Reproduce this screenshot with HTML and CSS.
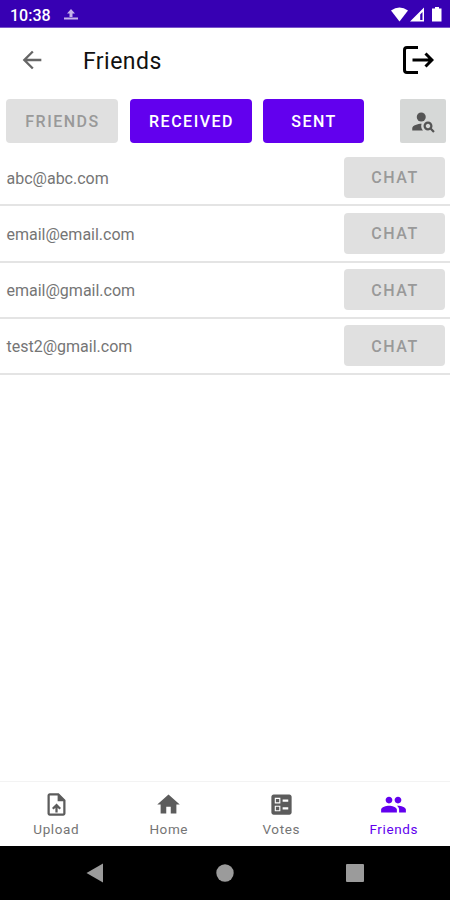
FILE: index.html
```
<!DOCTYPE html>
<html lang="en">
<head>
<meta charset="UTF-8">
<title>Friends</title>
<link rel="stylesheet" href="styles.css">
</head>
<body>

<div class="status-bar">
    <span class="clock">10:38</span>
    <svg class="status-upload" width="14" height="12" viewBox="0 0 14 12"><path d="M7 0l4 4.500H8.500V8h-3V4.500H3zM0 8.500h14v2H0z"/></svg>
    <svg class="status-icons" width="54" height="18" viewBox="0 0 54 18">
        <path d="M1 4.500Q9.500 -1.500 18 4.500L9.500 15.500z"/>
        <path fill-rule="evenodd" d="M34 1.500v14H20zM32.500 6v8h-2.300V8.500z"/>
        <path d="M43 2.500h2V1h4v1.500h2.500v13H42v-13z"/>
    </svg>
</div>

<header class="app-bar">
    <svg class="back" width="28" height="28" viewBox="0 0 24 24"><path d="M20 11H7.830l5.590-5.590L12 4l-8 8 8 8 1.410-1.410L7.830 13H20z"/></svg>
    <h1 class="title">Friends</h1>
    <svg class="logout" width="32" height="30" viewBox="0 0 32 30"><path d="M16 2.500H5Q2.500 2.500 2.500 5v20q0 2.500 2.500 2.500h11M10.500 15H30M23.500 8.500L30 15l-6.500 6.500"/></svg>
</header>

<div class="tabs">
    <button class="btn tab-friends" disabled>FRIENDS</button>
    <button class="btn tab-received">RECEIVED</button>
    <button class="btn tab-sent">SENT</button>
    <button class="search" aria-label="Search people">
        <svg width="27" height="27" viewBox="0 0 24 24"><circle cx="10" cy="8" r="4"/><path d="M10.350 14.010C7.620 13.910 2 15.270 2 18v2h9.540c-2.470-2.760-1.230-5.890-1.190-5.990zM19.430 18.020c.36-.59.57-1.280.57-2.020 0-2.210-1.790-4-4-4s-4 1.790-4 4 1.790 4 4 4c.74 0 1.430-.22 2.020-.57L20.590 22 22 20.590l-2.570-2.570zM16 18c-1.100 0-2-.9-2-2s.9-2 2-2 2 .9 2 2-.9 2-2 2z"/></svg>
    </button>
</div>

<ul class="friend-list">
    <li><span class="email">abc@abc.com</span><button class="btn chat" disabled>CHAT</button></li>
    <li><span class="email">email@email.com</span><button class="btn chat" disabled>CHAT</button></li>
    <li><span class="email">email@gmail.com</span><button class="btn chat" disabled>CHAT</button></li>
    <li><span class="email">test2@gmail.com</span><button class="btn chat" disabled>CHAT</button></li>
</ul>

<nav class="bottom-nav">
    <a class="item">
        <svg width="27" height="27" viewBox="0 0 24 24"><path d="M14 2H6c-1.100 0-1.990.9-1.990 2L4 20c0 1.100.89 2 1.990 2H18c1.100 0 2-.9 2-2V8l-6-6zm4 18H6V4h7v5h5v11zM8 15.010l1.410 1.410L11 14.840V19h2v-4.160l1.590 1.590L16 15.010 12.010 11z"/></svg>
        <span>Upload</span>
    </a>
    <a class="item">
        <svg width="27" height="27" viewBox="0 0 24 24"><path d="M10 20v-6h4v6h5v-8h3L12 3 2 12h3v8z"/></svg>
        <span>Home</span>
    </a>
    <a class="item">
        <svg width="27" height="27" viewBox="0 0 24 24"><path fill-rule="evenodd" d="M13 9.500h5v-2h-5v2zm0 7h5v-2h-5v2zm6 4.500H5c-1.100 0-2-.9-2-2V5c0-1.100.9-2 2-2h14c1.100 0 2 .9 2 2v14c0 1.100-.9 2-2 2zM6 11h5V6H6v5zm1-4h3v3H7V7zM6 18h5v-5H6v5zm1-4h3v3H7v-3z"/></svg>
        <span>Votes</span>
    </a>
    <a class="item active">
        <svg width="27" height="27" viewBox="0 0 24 24"><path d="M16 11c1.660 0 2.990-1.340 2.990-3S17.660 5 16 5s-3 1.340-3 3 1.340 3 3 3zm-8 0c1.660 0 2.990-1.340 2.990-3S9.660 5 8 5 5 6.340 5 8s1.340 3 3 3zm0 2c-2.330 0-7 1.170-7 3.500V19h14v-2.500c0-2.330-4.670-3.500-7-3.500zm8 0c-.29 0-.62.02-.97.05 1.160.84 1.970 1.970 1.970 3.450V19h6v-2.500c0-2.330-4.670-3.500-7-3.500z"/></svg>
        <span>Friends</span>
    </a>
</nav>

<div class="system-nav">
    <svg width="18" height="20" viewBox="0 0 18 20"><path d="M17 .5v19L.5 10z"/></svg>
    <svg width="18" height="18" viewBox="0 0 18 18"><circle cx="9" cy="9" r="8.700"/></svg>
    <svg width="18" height="18" viewBox="0 0 18 18"><rect width="18" height="18" rx="1"/></svg>
</div>

</body>
</html>
```
FILE: styles.css
```
*{box-sizing:border-box;margin:0;padding:0}
body{
    font-family:Roboto,sans-serif;
    background:#fff;color:#111;
    display:flex;flex-direction:column;
    width:450px;height:900px;overflow:hidden;
}
svg{display:block;flex:none}

/* ─── Status bar ─────────────────────────────────────────────── */
.status-bar{
    height:28px;flex:none;padding:3px 6px 0 10px;
    background:#3700b3;color:#fff;
    display:flex;align-items:center;
    border-bottom:1px solid #7a55cb;
}
.clock{width:54px;font-size:16px;font-weight:500}
.status-upload{fill:#c5b2ea}
.status-icons{margin-left:auto;fill:#fff}

/* ─── App bar ────────────────────────────────────────────────── */
.app-bar{height:64px;flex:none;display:flex;align-items:center;padding:2px 16px 0 18px}
.back{fill:#666;margin-bottom:3px}
.title{margin-left:37px;font-size:23px;font-weight:400;letter-spacing:.45px}
.logout{margin:-2px 0 0 auto;fill:none;stroke:#000;stroke-width:3}

/* ─── Buttons ────────────────────────────────────────────────── */
.btn{
    border:0;border-radius:4px;
    background:#6200ee;color:#fff;
    font:500 16px Roboto,sans-serif;letter-spacing:1.500px;text-indent:1px;
}
.btn:disabled{background:#e0e0e0;color:#999}
.tabs{height:58px;flex:none;display:flex;padding:7px 4px 7px 6px}
.tab-friends{width:112px;margin-right:12px}
.tab-received{width:122px;margin-right:11px}
.tab-sent{width:101px}
.search{
    width:46px;margin-left:auto;border:0;border-radius:2px;
    background:#d6d8d7;fill:#555;
    display:flex;align-items:center;justify-content:center;
}

/* ─── Friend list ────────────────────────────────────────────── */
.friend-list{list-style:none;flex:1}
.friend-list li{
    height:56.250px;padding:0 5px 0 6.500px;
    display:flex;align-items:center;justify-content:space-between;
    border-bottom:2px solid #e4e4e4;
}
.email{padding-top:2px;font-size:16px;color:#757575}
.chat{width:101px;height:41px;padding-top:1px}

/* ─── Bottom navigation ──────────────────────────────────────── */
.bottom-nav{height:65px;flex:none;display:flex;border-top:1px solid #f3f3f3}
.item{
    flex:1;padding-top:9px;
    display:flex;flex-direction:column;align-items:center;
    color:#757575;fill:#5c5c5c;
    font-size:13.500px;line-height:16px;letter-spacing:.6px;
}
.item span{margin-top:3px}
.active{color:#6200ee;fill:#6200ee}

/* ─── System navigation ──────────────────────────────────────── */
.system-nav{
    height:54px;flex:none;padding:0 86px;
    background:#000;fill:#9b9b9b;
    display:flex;align-items:center;justify-content:space-between;
}
```
